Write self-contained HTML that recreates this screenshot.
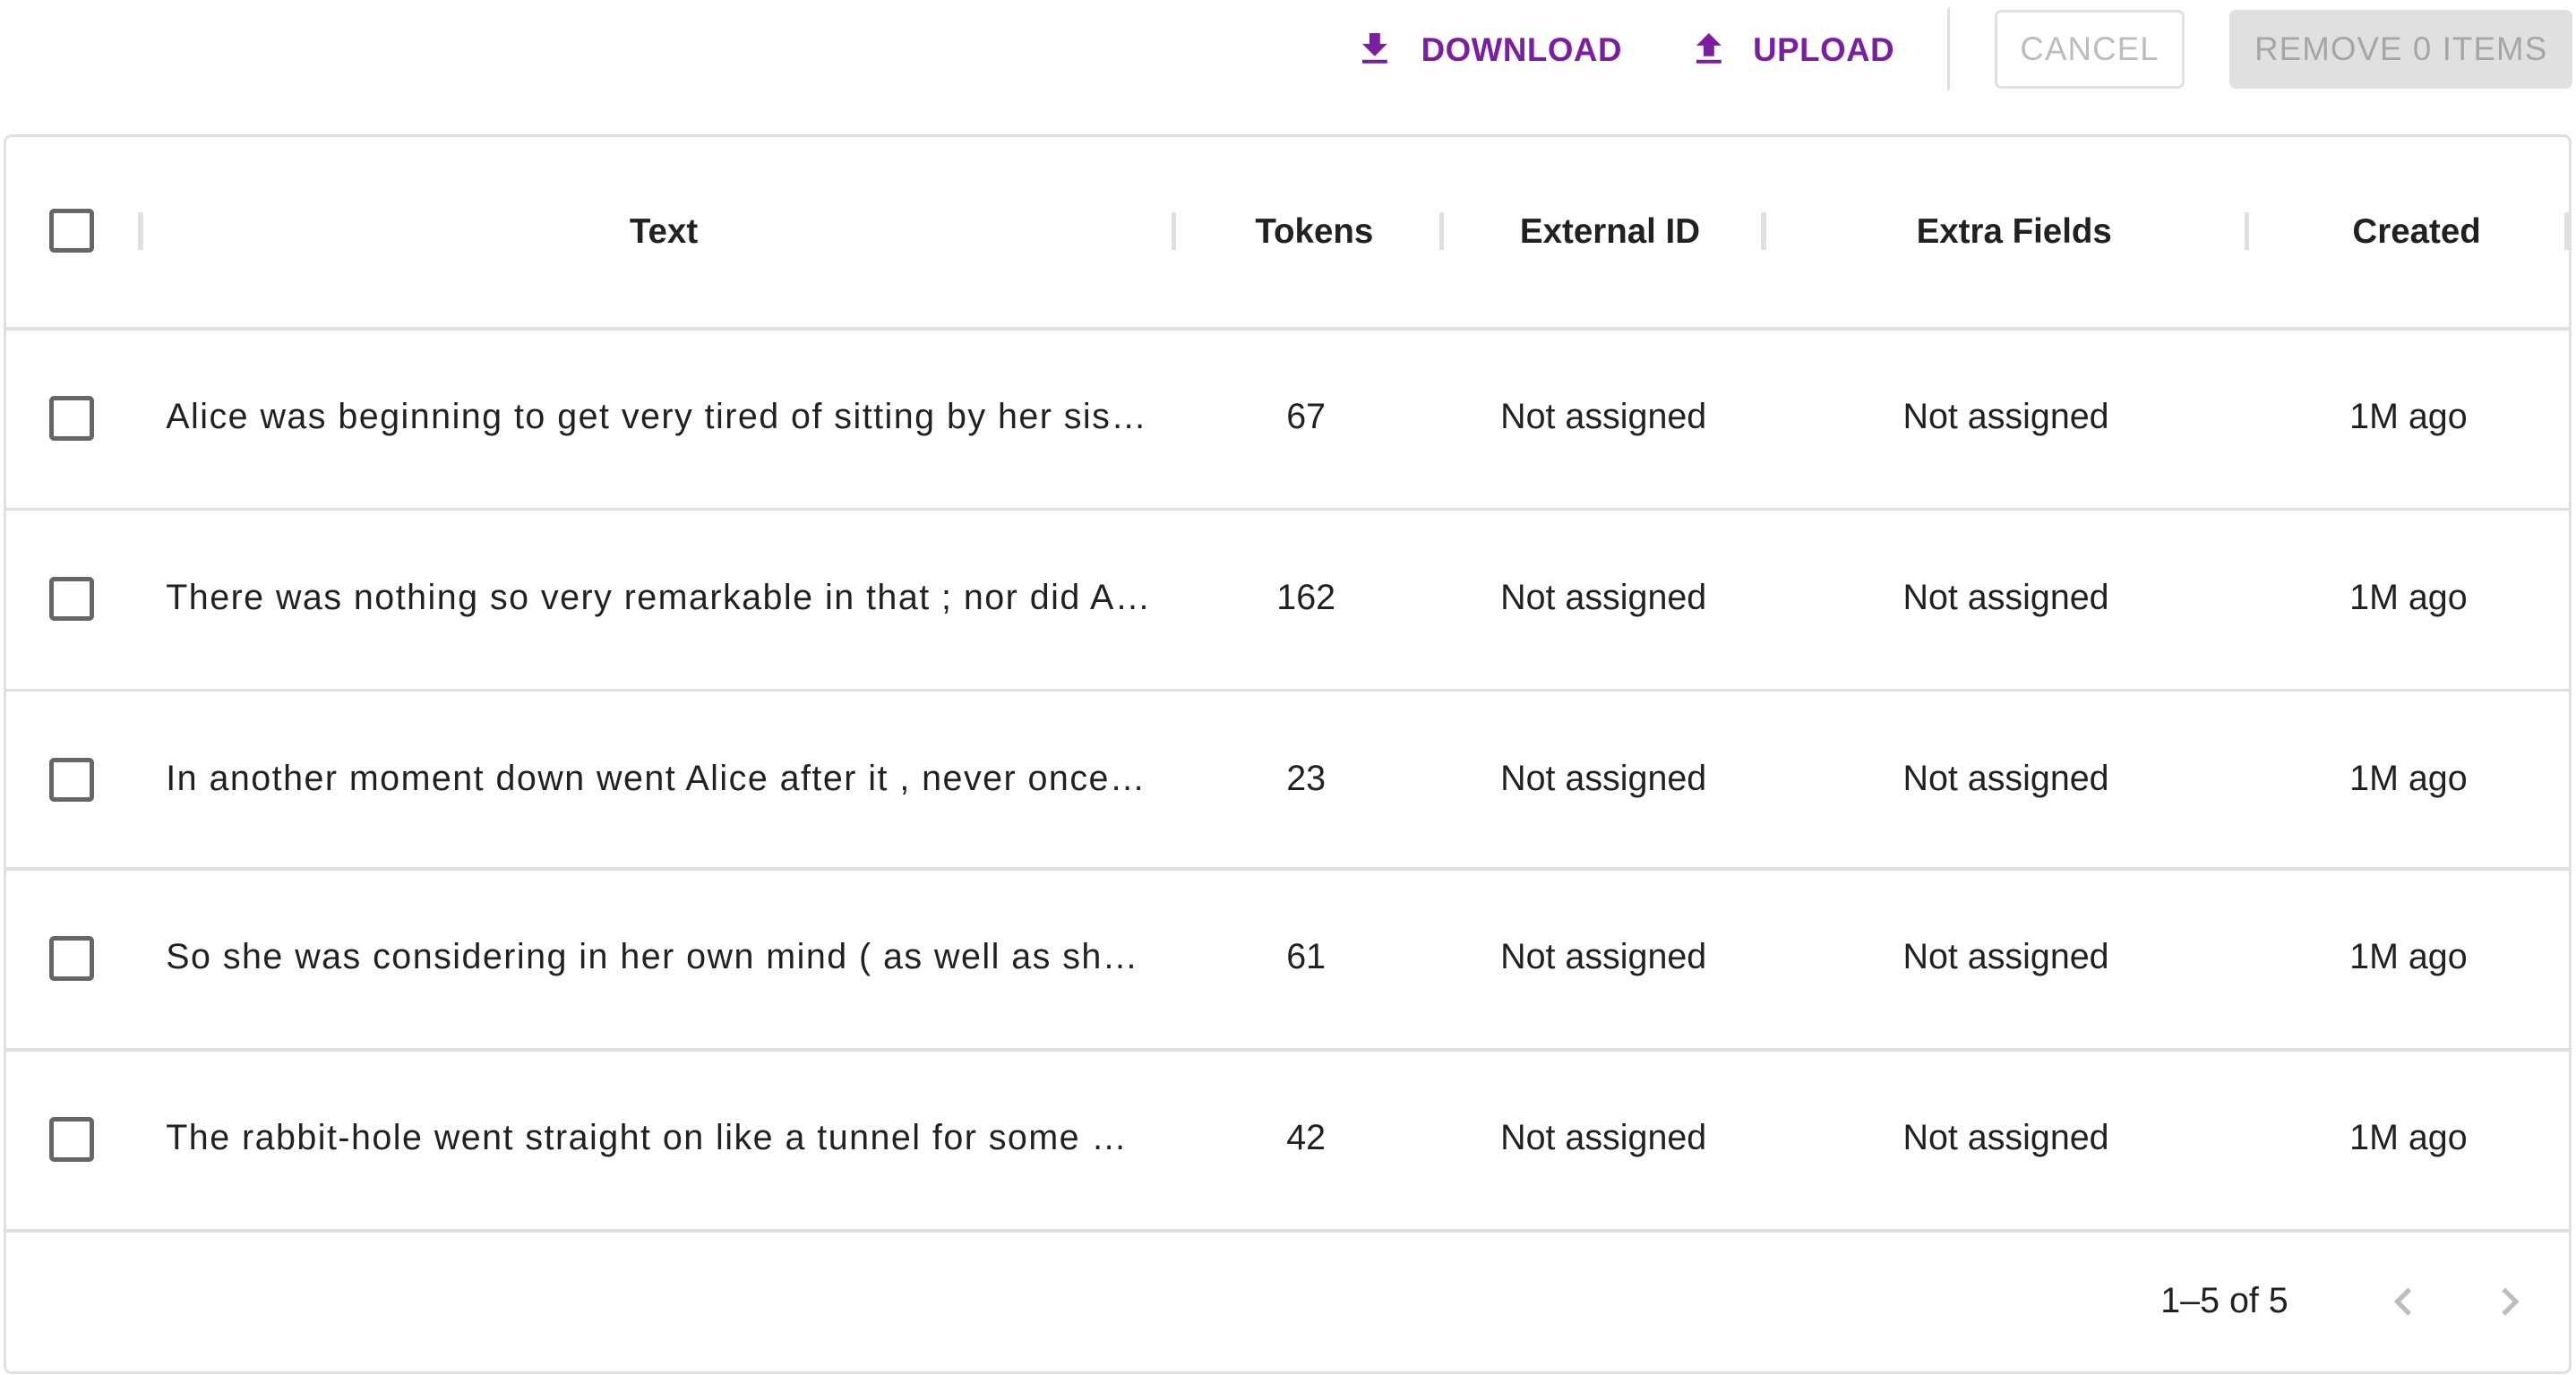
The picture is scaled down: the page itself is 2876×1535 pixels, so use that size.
<!DOCTYPE html>
<html><head><meta charset="utf-8"><style>
html,body{margin:0;padding:0;background:#fff;overflow:hidden}
body{width:2876px;height:1535px}
#w{zoom:1.8342;width:1568px;height:837px;position:relative;font-family:"Liberation Sans",sans-serif;color:rgba(0,0,0,.87)}
.abs{position:absolute}
.btn{position:absolute;top:6px;height:48px;display:flex;align-items:center;justify-content:center;font-size:20px;letter-spacing:.6px;box-sizing:border-box;border-radius:4px}
.cb{position:absolute;left:30px;width:27px;height:27px;box-sizing:border-box;border:3px solid #666;border-radius:3px}
.sep{position:absolute;top:129px;width:3px;height:23px;background:#e0e0e0}
.h{position:absolute;top:128px;font-size:21px;font-weight:bold;text-align:center;line-height:26px}
.line{position:absolute;left:3px;right:3px;height:2px;background:#e0e0e0}
.c{position:absolute;font-size:21.5px;line-height:26px;text-align:center;white-space:nowrap}
.t{position:absolute;left:101px;width:620px;font-size:21.5px;letter-spacing:.8px;line-height:26px;white-space:nowrap;overflow:hidden}
</style></head><body><div id="w">
<svg class="abs" style="left:824px;top:17px" width="26" height="26" viewBox="0 0 24 24"><path fill="#7b1fa2" d="M19 9h-4V3H9v6H5l7 7 7-7zM5 18v2h14v-2H5z"/></svg>
<div class="abs" style="left:865px;top:19px;font-size:20px;font-weight:bold;color:#7b1fa2;letter-spacing:.3px">DOWNLOAD</div>
<svg class="abs" style="left:1027px;top:17px" width="26" height="26" viewBox="0 0 24 24"><path fill="#7b1fa2" d="M9 16h6v-6h4l-7-7-7 7h4zm-4 2h14v2H5z"/></svg>
<div class="abs" style="left:1067px;top:19px;font-size:20px;font-weight:bold;color:#7b1fa2;letter-spacing:.3px">UPLOAD</div>
<div class="abs" style="left:1185px;top:5px;width:2px;height:50px;background:#e0e0e0"></div>
<div class="btn" style="left:1214px;width:116px;border:2px solid #e0e0e0;color:#bdbdbd">CANCEL</div>
<div class="btn" style="left:1357px;width:209px;background:#e0e0e0;color:#a6a6a6">REMOVE 0 ITEMS</div>

<div class="abs" style="left:2px;top:82px;width:1560px;height:751px;border:2px solid #e0e0e0;border-radius:5px"></div>
<div class="cb" style="top:127px"></div>
<div class="sep" style="left:84px"></div><div class="sep" style="left:713px"></div><div class="sep" style="left:876px"></div><div class="sep" style="left:1072px"></div><div class="sep" style="left:1366px"></div><div class="sep" style="left:1561px"></div>
<div class="h" style="left:89px;width:630px">Text</div>
<div class="h" style="left:720px;width:160px">Tokens</div>
<div class="h" style="left:882px;width:196px">External ID</div>
<div class="h" style="left:1078px;width:296px">Extra Fields</div>
<div class="h" style="left:1372px;width:198px">Created</div>

<div class="line" style="top:199px"></div>
<div class="line" style="top:309px"></div>
<div class="line" style="top:419px"></div>
<div class="line" style="top:528px"></div>
<div class="line" style="top:638px"></div>
<div class="line" style="top:748px"></div>

<div class="cb" style="top:241px"></div><div class="t" style="top:241px">Alice was beginning to get very tired of sitting by her sis…</div>
<div class="c" style="top:241px;left:715px;width:160px">67</div><div class="c" style="top:241px;left:878px;width:196px">Not assigned</div><div class="c" style="top:241px;left:1074px;width:294px">Not assigned</div><div class="c" style="top:241px;left:1368px;width:196px">1M ago</div>

<div class="cb" style="top:351px"></div><div class="t" style="top:351px">There was nothing so very remarkable in that ; nor did A…</div>
<div class="c" style="top:351px;left:715px;width:160px">162</div><div class="c" style="top:351px;left:878px;width:196px">Not assigned</div><div class="c" style="top:351px;left:1074px;width:294px">Not assigned</div><div class="c" style="top:351px;left:1368px;width:196px">1M ago</div>

<div class="cb" style="top:461px"></div><div class="t" style="top:461px">In another moment down went Alice after it , never once…</div>
<div class="c" style="top:461px;left:715px;width:160px">23</div><div class="c" style="top:461px;left:878px;width:196px">Not assigned</div><div class="c" style="top:461px;left:1074px;width:294px">Not assigned</div><div class="c" style="top:461px;left:1368px;width:196px">1M ago</div>

<div class="cb" style="top:570px"></div><div class="t" style="top:570px">So she was considering in her own mind ( as well as sh…</div>
<div class="c" style="top:570px;left:715px;width:160px">61</div><div class="c" style="top:570px;left:878px;width:196px">Not assigned</div><div class="c" style="top:570px;left:1074px;width:294px">Not assigned</div><div class="c" style="top:570px;left:1368px;width:196px">1M ago</div>

<div class="cb" style="top:680px"></div><div class="t" style="top:680px">The rabbit-hole went straight on like a tunnel for some …</div>
<div class="c" style="top:680px;left:715px;width:160px">42</div><div class="c" style="top:680px;left:878px;width:196px">Not assigned</div><div class="c" style="top:680px;left:1074px;width:294px">Not assigned</div><div class="c" style="top:680px;left:1368px;width:196px">1M ago</div>

<div class="c" style="top:779px;left:1300px;width:108px;text-align:center">1–5 of 5</div>
<svg class="abs" style="left:1446px;top:775px" width="34" height="34" viewBox="0 0 24 24"><path fill="#bdbdbd" d="M15.41 7.41L14 6l-6 6 6 6 1.41-1.41L10.83 12z"/></svg>
<svg class="abs" style="left:1511px;top:775px" width="34" height="34" viewBox="0 0 24 24"><path fill="#bdbdbd" d="M10 6L8.59 7.41 13.17 12l-4.58 4.59L10 18l6-6z"/></svg>
</div></body></html>
